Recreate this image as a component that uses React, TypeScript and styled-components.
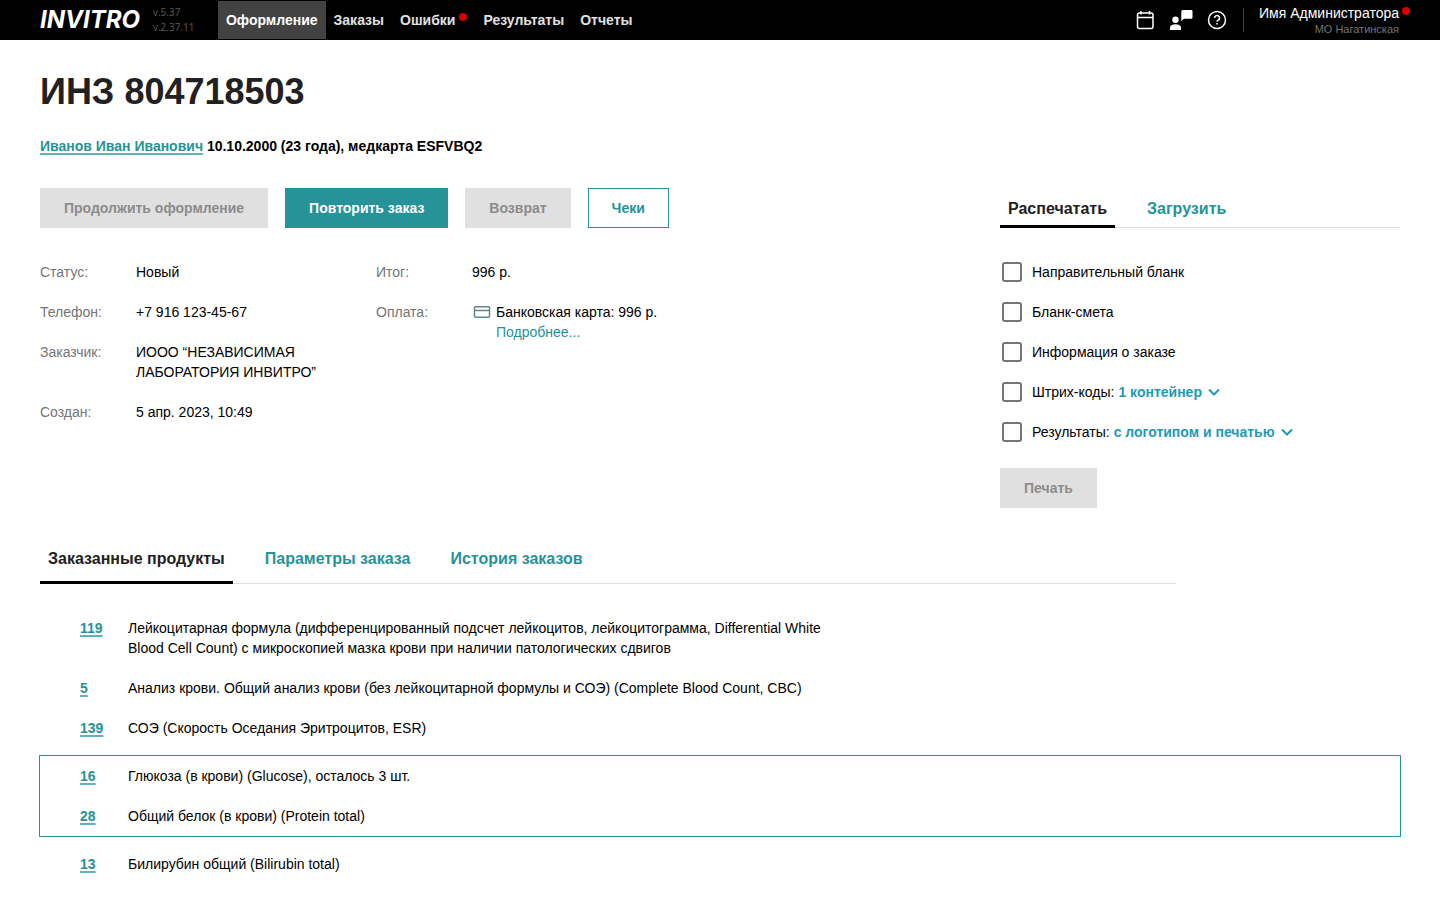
import React, { useState } from "react";
import styled, { createGlobalStyle, css } from "styled-components";

const color = {
  teal: "#259398",
  tealLine: "#5fb2b5",
  blue: "#1f9ab5",
  text: "#000",
  heading: "#212121",
  muted: "#757575",
  disabledBg: "#e0e0e0",
  disabledText: "#8c8c8c",
  line: "#e0e0e0",
  red: "#d50000",
};

const GlobalStyle = createGlobalStyle`
  *, *::before, *::after { box-sizing: border-box; }
  body {
    margin: 0;
    background: #fff;
    color: ${color.text};
    font: 14px/20px "Liberation Sans", Arial, sans-serif;
  }
  button, select, input { font: inherit; margin: 0; }
`;

const TopBar = styled.header`
  display: flex;
  align-items: center;
  height: 40px;
  padding: 0 41px 0 40px;
  background: #000;
`;

const Logo = styled.a`
  color: #fff;
  font: italic 700 24px/24px Inter, "Liberation Sans", sans-serif;
  text-decoration: none;
`;

const Versions = styled.div`
  width: 65px;
  margin-left: 13px;
  color: #5c5c5c;
  font: 10px/15px "Open Sans", "Noto Sans", sans-serif;
`;

const Nav = styled.nav`
  display: flex;
  flex: 1;
`;

const NavLink = styled.a<{ $active?: boolean }>`
  display: flex;
  align-items: center;
  gap: 4px;
  height: 38px;
  padding: 0 8px;
  background: ${(p) => (p.$active ? "#424242" : "transparent")};
  color: ${(p) => (p.$active ? "#fff" : "#e0e0e0")};
  font-weight: 700;
  text-decoration: none;
`;

const Dot = styled.span`
  width: 8px;
  height: 8px;
  margin-bottom: 6px;
  border-radius: 50%;
  background: ${color.red};
`;

const IconGroup = styled.div`
  display: flex;
  gap: 12px;
  padding-right: 14px;
`;

const IconButton = styled.button`
  display: flex;
  padding: 0;
  border: 0;
  background: none;
  color: #fff;
  cursor: pointer;
`;

const User = styled.div`
  display: flex;
  align-items: center;
  height: 24px;
  padding-left: 15px;
  border-left: 1px solid #424242;
  text-align: right;
`;

const UserText = styled.div`
  position: relative;
`;

const UserName = styled.div`
  color: #fff;
  line-height: 18px;
`;

const UserOffice = styled.div`
  color: ${color.muted};
  font-size: 11px;
  line-height: 14px;
`;

const UserBadge = styled.span`
  position: absolute;
  top: 3px;
  right: -11px;
  width: 8px;
  height: 8px;
  border-radius: 50%;
  background: ${color.red};
`;

const Page = styled.main`
  padding: 32px 40px 24px;
`;

const Title = styled.h1`
  margin: 0;
  color: ${color.heading};
  font-size: 36px;
  line-height: 40px;
`;

const Patient = styled.p`
  margin: 24px 0 32px;
  font-weight: 700;
`;

const StrongLink = styled.a`
  color: ${color.teal};
  font-weight: 700;
  text-decoration: underline 2px ${color.tealLine};
  text-underline-offset: 2px;
  text-decoration-skip-ink: none;
`;

const Columns = styled.div`
  display: grid;
  grid-template-columns: 1fr 400px;
  gap: 40px;
  align-items: start;
`;

const Actions = styled.div`
  display: flex;
  gap: 17px;
`;

const Button = styled.button<{ $kind?: "solid" | "outline" }>`
  height: 40px;
  padding: 0 24px;
  border: 0;
  background: ${color.teal};
  color: #fff;
  font-weight: 700;
  cursor: pointer;

  ${(p) =>
    p.$kind === "outline" &&
    css`
      padding: 0 23px;
      border: 1px solid ${color.teal};
      background: #fff;
      color: ${color.teal};
    `}

  &:disabled {
    background: ${color.disabledBg};
    color: ${color.disabledText};
    cursor: default;
  }
`;

const Details = styled.div`
  display: grid;
  grid-template-columns: 296px 296px;
  column-gap: 40px;
  margin-top: 34px;
`;

const DetailList = styled.dl`
  display: grid;
  grid-template-columns: 96px 1fr;
  row-gap: 20px;
  align-content: start;
  margin: 0;
`;

const Term = styled.dt`
  color: ${color.muted};
`;

const Value = styled.dd`
  margin: 0;
`;

const Payment = styled.div`
  display: flex;
`;

const CardIcon = styled.svg`
  flex: none;
  width: 20px;
  height: 20px;
  margin-right: 4px;
`;

const TextLink = styled.a`
  color: ${color.teal};
  text-decoration: none;
`;

const Tabs = styled.div`
  display: flex;
  gap: 24px;
  box-shadow: inset 0 -1px ${color.line};
`;

const ProductTabs = styled(Tabs)`
  max-width: 1136px;
  margin-top: 36px;
`;

const Tab = styled.button<{ $active: boolean; $tall?: boolean }>`
  padding: ${(p) => (p.$tall ? "3px 8px 10px" : "9px 8px 4px")};
  border: 0;
  border-bottom: 3px solid ${(p) => (p.$active ? "#000" : "transparent")};
  background: none;
  color: ${(p) => (p.$active ? color.heading : color.teal)};
  font-size: 16px;
  font-weight: 700;
  line-height: 24px;
  cursor: pointer;
`;

const CheckList = styled.div`
  display: flex;
  flex-direction: column;
  gap: 20px;
  margin: 34px 0 26px;
`;

const CheckRow = styled.div`
  display: flex;
  gap: 4px;
  padding-left: 2px;
`;

const CheckLabel = styled.label`
  display: flex;
  gap: 10px;
  cursor: pointer;
`;

const Checkbox = styled.input`
  appearance: none;
  width: 20px;
  height: 20px;
  border: 2px solid ${color.muted};
  border-radius: 3px;
  background: #fff;

  &:checked {
    border-color: ${color.teal};
    background: ${color.teal};
  }
`;

const SelectWrap = styled.span`
  position: relative;
  color: ${color.blue};
`;

const Select = styled.select`
  appearance: none;
  field-sizing: content;
  display: block;
  height: 20px;
  padding: 0 20px 0 0;
  border: 0;
  background: none;
  color: inherit;
  font-weight: 700;
  cursor: pointer;
`;

const Chevron = styled.svg`
  position: absolute;
  top: 4px;
  right: 2px;
  width: 12px;
  height: 12px;
  pointer-events: none;
`;

const Products = styled.section`
  padding-top: 34px;
`;

const ProductList = styled.ul<{ $boxed?: boolean }>`
  display: flex;
  flex-direction: column;
  gap: 20px;
  margin: 0;
  padding: 0 40px;
  list-style: none;

  ${(p) =>
    p.$boxed &&
    css`
      margin: 17px -1px;
      padding: 10px 40px;
      border: 1px solid ${color.teal};
    `}
`;

const ProductItem = styled.li`
  display: grid;
  grid-template-columns: 48px minmax(0, 720px);
`;

const CalendarIcon = () => (
  <svg width="24" height="24" viewBox="0 0 24 24" fill="none" stroke="currentColor" strokeWidth="1.5">
    <rect x="4.5" y="5" width="15.500" height="15.500" rx="2" />
    <path d="M4.500 9.500h15.500M8 3v3.500M16.500 3v3.500" />
  </svg>
);

const ConsultIcon = () => (
  <svg width="24" height="24" viewBox="0 0 24 24" fill="currentColor">
    <circle cx="6.500" cy="11.800" r="3.200" />
    <path d="M1 22v-2.200C1 17.500 3 16.300 6.500 16.300S12 17.500 12 19.800V22z" />
    <path d="M14 2h8.300a1.200 1.200 0 0 1 1.200 1.200v6.300a1.200 1.200 0 0 1-1.200 1.200H14.800L12.300 13.300V3.500A1.500 1.500 0 0 1 14 2z" />
  </svg>
);

const HelpIcon = () => (
  <svg width="24" height="24" viewBox="0 0 24 24" fill="none" stroke="currentColor" strokeWidth="1.5">
    <circle cx="12" cy="12" r="8.500" />
    <path d="M9.500 10a2.500 2.500 0 1 1 3.800 2.100c-.8.5-1.300.9-1.300 1.600" />
    <path d="M12 15v1.600" />
  </svg>
);

const nav = [
  { title: "Оформление", active: true },
  { title: "Заказы" },
  { title: "Ошибки", alert: true },
  { title: "Результаты" },
  { title: "Отчеты" },
];

const printForms: { title: string; option?: string }[] = [
  { title: "Направительный бланк" },
  { title: "Бланк-смета" },
  { title: "Информация о заказе" },
  { title: "Штрих-коды:", option: "1 контейнер" },
  { title: "Результаты:", option: "с логотипом и печатью" },
];

type Product = { code: string; name: string };

const productGroups: { boxed?: boolean; items: Product[] }[] = [
  {
    items: [
      {
        code: "119",
        name: "Лейкоцитарная формула (дифференцированный подсчет лейкоцитов, лейкоцитограмма, Differential White Blood Cell Count) с микроскопией мазка крови при наличии патологических сдвигов",
      },
      {
        code: "5",
        name: "Анализ крови. Общий анализ крови (без лейкоцитарной формулы и СОЭ) (Complete Blood Count, CBC)",
      },
      { code: "139", name: "СОЭ (Скорость Оседания Эритроцитов, ESR)" },
    ],
  },
  {
    boxed: true,
    items: [
      { code: "16", name: "Глюкоза (в крови) (Glucose), осталось 3 шт." },
      { code: "28", name: "Общий белок (в крови) (Protein total)" },
    ],
  },
  { items: [{ code: "13", name: "Билирубин общий (Bilirubin total)" }] },
];

const sideTabs = ["Распечатать", "Загрузить"];
const productTabs = ["Заказанные продукты", "Параметры заказа", "История заказов"];

export default function App() {
  const [sideTab, setSideTab] = useState(0);
  const [productTab, setProductTab] = useState(0);

  return (
    <>
      <GlobalStyle />
      <TopBar>
        <Logo href="#">INVITRO</Logo>
        <Versions>
          <div>v.5.37</div>
          <div>v.2.37.11</div>
        </Versions>
        <Nav>
          {nav.map((item) => (
            <NavLink key={item.title} href="#" $active={item.active}>
              {item.title}
              {item.alert && <Dot />}
            </NavLink>
          ))}
        </Nav>
        <IconGroup>
          <IconButton aria-label="Календарь"><CalendarIcon /></IconButton>
          <IconButton aria-label="Консультация"><ConsultIcon /></IconButton>
          <IconButton aria-label="Помощь"><HelpIcon /></IconButton>
        </IconGroup>
        <User>
          <UserText>
            <UserName>Имя Администратора</UserName>
            <UserOffice>МО Нагатинская</UserOffice>
            <UserBadge />
          </UserText>
        </User>
      </TopBar>

      <Page>
        <Title>ИНЗ 804718503</Title>
        <Patient>
          <StrongLink href="#">Иванов Иван Иванович</StrongLink> 10.10.2000 (23 года), медкарта ESFVBQ2
        </Patient>

        <Columns>
          <section>
            <Actions>
              <Button disabled>Продолжить оформление</Button>
              <Button>Повторить заказ</Button>
              <Button disabled>Возврат</Button>
              <Button $kind="outline">Чеки</Button>
            </Actions>
            <Details>
              <DetailList>
                <Term>Статус:</Term>
                <Value>Новый</Value>
                <Term>Телефон:</Term>
                <Value>+7 916 123-45-67</Value>
                <Term>Заказчик:</Term>
                <Value>ИООО “НЕЗАВИСИМАЯ ЛАБОРАТОРИЯ ИНВИТРО”</Value>
                <Term>Создан:</Term>
                <Value>5 апр. 2023, 10:49</Value>
              </DetailList>
              <DetailList>
                <Term>Итог:</Term>
                <Value>996 р.</Value>
                <Term>Оплата:</Term>
                <Value>
                  <Payment>
                    <CardIcon viewBox="0 0 20 20" fill="none" stroke="#5f8792" strokeWidth="1.500">
                      <rect x="2.500" y="4.800" width="15" height="10.500" rx="1" />
                      <path d="M2.500 8.500h15" />
                    </CardIcon>
                    <div>
                      <div>Банковская карта: 996 р.</div>
                      <TextLink href="#">Подробнее...</TextLink>
                    </div>
                  </Payment>
                </Value>
              </DetailList>
            </Details>
          </section>

          <aside>
            <Tabs role="tablist">
              {sideTabs.map((title, i) => (
                <Tab key={title} role="tab" aria-selected={i === sideTab} $active={i === sideTab} onClick={() => setSideTab(i)}>
                  {title}
                </Tab>
              ))}
            </Tabs>
            <CheckList>
              {printForms.map((form) => (
                <CheckRow key={form.title}>
                  <CheckLabel>
                    <Checkbox type="checkbox" />
                    {form.title}
                  </CheckLabel>
                  {form.option && (
                    <SelectWrap>
                      <Select aria-label={form.title}>
                        <option>{form.option}</option>
                      </Select>
                      <Chevron viewBox="0 0 12 12" fill="none" stroke="currentColor" strokeWidth="2">
                        <path d="M1 3.500l5 5 5-5" />
                      </Chevron>
                    </SelectWrap>
                  )}
                </CheckRow>
              ))}
            </CheckList>
            <Button disabled>Печать</Button>
          </aside>
        </Columns>

        <ProductTabs role="tablist">
          {productTabs.map((title, i) => (
            <Tab key={title} role="tab" aria-selected={i === productTab} $tall $active={i === productTab} onClick={() => setProductTab(i)}>
              {title}
            </Tab>
          ))}
        </ProductTabs>

        <Products>
          {productGroups.map((group) => (
            <ProductList key={group.items[0].code} $boxed={group.boxed}>
              {group.items.map((item) => (
                <ProductItem key={item.code}>
                  <div>
                    <StrongLink href="#">{item.code}</StrongLink>
                  </div>
                  <div>{item.name}</div>
                </ProductItem>
              ))}
            </ProductList>
          ))}
        </Products>
      </Page>
    </>
  );
}
